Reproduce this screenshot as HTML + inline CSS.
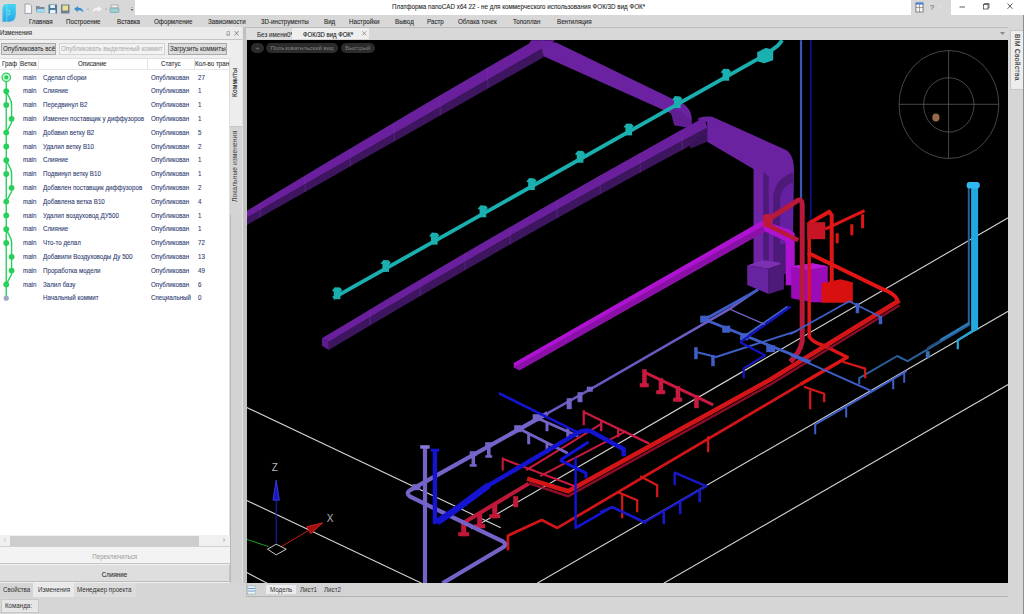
<!DOCTYPE html>
<html><head><meta charset="utf-8">
<style>
*{margin:0;padding:0;box-sizing:border-box}
html,body{width:1024px;height:614px;overflow:hidden;background:#d6d6d6;font-family:"Liberation Sans",sans-serif;font-size:6.2px;color:#222}
.a{position:absolute;white-space:nowrap}
.mi{top:18.4px;color:#2a2a2a;-webkit-text-stroke:0.1px #2a2a2a;font-size:7.1px;transform:scaleX(0.875);transform-origin:0 50%}
.btn{top:43px;height:12px;border:1px solid #a9a9a9;background:#dcdcdc;line-height:10px;padding-left:1px;overflow:hidden;color:#222}
.th{top:60.4px;color:#333;-webkit-text-stroke:0.1px #333;font-size:7.1px;transform:scaleX(0.875);transform-origin:0 50%}
.row{color:#2f3d72;-webkit-text-stroke:0.1px #2f3d72;font-size:7.1px;transform:scaleX(0.875);transform-origin:0 50%}
.pill{top:43.2px;height:9.5px;border-radius:5px;background:#2b2b2b;color:#858585;line-height:11px;text-align:center;font-size:6px}
.vt{transform-origin:0 0;color:#333}
.t{display:inline-block;font-size:7.1px;transform:scaleX(0.875);transform-origin:0 50%}
.tc{display:inline-block;font-size:7.1px;transform:scaleX(0.875);transform-origin:50% 50%}
</style></head><body>
<!-- title bar -->
<div class="a" style="left:0;top:0;width:1024px;height:14.5px;background:#fff"></div>
<div class="a" style="left:0;top:0;width:135px;height:14.5px;background:#d8d8d8"></div>
<div class="a" style="left:911px;top:0;width:40px;height:14.5px;background:#d8d8d8"></div>
<svg class="a" style="left:0;top:0;z-index:5" width="140" height="26">
 <defs><linearGradient id="lg" x1="0" y1="0" x2="0" y2="1"><stop offset="0" stop-color="#3fd6f2"/><stop offset="1" stop-color="#2aa6e6"/></linearGradient></defs>
 <path d="M2.5 21.8 L2.5 9 Q2.5 4 7 4 L15.8 4 L15.8 14 Q15.8 21.8 9 21.8 Z" fill="url(#lg)"/>
 <path d="M6.8 4.2 V21.6" stroke="#9fe4f6" stroke-width="0.7" opacity="0.85"/>
 <path d="M7.2 10.6 H9.6 V14.6 H7.2" fill="none" stroke="#b8eefa" stroke-width="0.7" opacity="0.85"/>
 <path d="M25 4 L29.5 4 L31.5 6 L31.5 13.5 L25 13.5Z" fill="#f4f8fc" stroke="#777" stroke-width="0.6"/>
 <path d="M36 6 L39 6 L40 7 L44.5 7 L44.5 12.5 L36 12.5Z" fill="#7d8a96"/><path d="M37 9 L45.5 9 L44 12.5 L36 12.5Z" fill="#9fd8f2"/>
 <rect x="48.5" y="4.5" width="8.5" height="9" fill="#4d7a98"/><rect x="50.3" y="5" width="4.6" height="3" fill="#e8f0f8"/><rect x="50" y="10" width="5.5" height="3.5" fill="#e8f0f8"/>
 <rect x="61" y="4.5" width="8.5" height="9" fill="#6c8293"/><rect x="62.5" y="5.5" width="5.5" height="5" fill="#f0e08a"/>
 <path d="M74 9 L78 6 L78 7.8 Q83 7.5 83.5 12.5 Q81.5 10 78 10.3 L78 12Z" fill="#3a8fd0"/>
 <circle cx="88" cy="9" r="0.5" fill="#666"/>
 <path d="M102 9 L98 6 L98 7.8 Q93 7.5 92.5 12.5 Q94.5 10 98 10.3 L98 12Z" fill="#f4f4f4"/>
 <circle cx="106" cy="9" r="0.5" fill="#666"/>
 <rect x="111" y="5" width="7" height="3" fill="#f0f0f0" stroke="#777" stroke-width="0.5"/><rect x="110" y="8" width="9" height="4.5" rx="1" fill="#9ccfcf" stroke="#6a8a98" stroke-width="0.5"/>
 <path d="M131.5 7.5 L132.5 7.5 M131 9.5 L133 9.5 L132 10.5Z" stroke="#555" stroke-width="0.6" fill="#555"/>
</svg>
<div class="a" style="left:392px;top:2.6px;color:#222"><span class="t" style="font-size:7.15px;-webkit-text-stroke:0.08px #222">Платформа nanoCAD x64 22 - не для коммерческого использования ФОК/3D вид ФОК*</span></div>
<svg class="a" style="left:900px;top:0" width="124" height="15">
 <rect x="15" y="1.5" width="9" height="11" fill="#c8c8c8"/>
 <rect x="16" y="3.5" width="7" height="8.5" fill="#f4f4f4" stroke="#555" stroke-width="0.6"/><rect x="15.8" y="2.5" width="7.4" height="2" fill="#3b7fd8"/><path d="M19.5 4.5 V12 M16 7.5 H23" stroke="#555" stroke-width="0.5"/>
 <text x="29.8" y="10.2" font-size="8" fill="#5a5a5a" font-family="Liberation Sans">?</text>
 <path d="M39.5 6.5 L41.5 6.5 L40.5 7.6Z" fill="#f8f8f8"/>
 <path d="M59.5 7 H65" stroke="#333" stroke-width="0.8"/>
 <rect x="83.5" y="4.5" width="4.5" height="4.5" fill="none" stroke="#333" stroke-width="0.7"/><path d="M84.5 4.5 V3.5 H89 V8 H88" fill="none" stroke="#333" stroke-width="0.7"/>
 <path d="M107.5 3.5 L112.5 8.8 M112.5 3.5 L107.5 8.8" stroke="#333" stroke-width="0.8"/>
</svg>
<!-- menu bar -->
<div class="a" style="left:0;top:14.5px;width:1024px;height:12.5px;background:#d8d8d8"></div>
<div class="a mi" style="left:29px">Главная</div>
<div class="a mi" style="left:66px">Построение</div>
<div class="a mi" style="left:117px">Вставка</div>
<div class="a mi" style="left:154px">Оформление</div>
<div class="a mi" style="left:208px">Зависимости</div>
<div class="a mi" style="left:261px">3D-инструменты</div>
<div class="a mi" style="left:323.5px">Вид</div>
<div class="a mi" style="left:348.5px">Настройки</div>
<div class="a mi" style="left:394.5px">Вывод</div>
<div class="a mi" style="left:427px">Растр</div>
<div class="a mi" style="left:457.5px">Облака точек</div>
<div class="a mi" style="left:513px">Топоплан</div>
<div class="a mi" style="left:556.5px">Вентиляция</div>

<!-- left panel -->
<div class="a" style="left:0;top:27px;width:243px;height:12.5px;background:#ebebeb;border-bottom:1px solid #c4c4c4"></div>
<div class="a" style="left:0;top:29.1px;color:#333;-webkit-text-stroke:0.1px #333"><span class="t">Изменения</span></div>
<svg class="a" style="left:224px;top:29px" width="18" height="9">
 <path d="M3 2.5 H5.5 V6 H3Z M2.5 6 H6" fill="none" stroke="#888" stroke-width="0.6"/>
 <path d="M10.5 2 L14.5 6.5 M14.5 2 L10.5 6.5" stroke="#666" stroke-width="0.7"/>
</svg>
<div class="a" style="left:0;top:39.5px;width:230px;height:543px;background:#efefef"></div>
<div class="a" style="left:229.5px;top:39.5px;width:12.5px;height:543px;background:#d3d3d3;border-left:1px solid #b9b9bd"></div>
<div class="a" style="left:230.4px;top:40px;width:11.3px;height:85.6px;background:#ededed"></div>
<div class="a" style="left:230.4px;top:125.6px;width:11.3px;height:89.4px;background:#d4d4d4;border-top:1px solid #c6c6c6"></div>
<div class="a vt" style="left:231.2px;top:97.2px;transform:rotate(-90deg);font-size:6.8px;-webkit-text-stroke:0.12px #333">Коммиты</div>
<div class="a vt" style="left:230.6px;top:201.6px;transform:rotate(-90deg);font-size:6.8px;color:#444">Локальные изменения</div>
<div class="a" style="left:241.7px;top:27px;width:5.3px;height:556px;background:#c2c2c2;border-left:0.7px solid #e2e2e2"></div>
<div class="a btn" style="left:1.3px;width:54.7px"><span class="t">Опубликовать всё</span></div>
<div class="a btn" style="left:59.3px;width:105.6px;color:#a8a8a8;background:#f3f3f3;border-color:#d2d2d2"><span class="t">Опубликовать выделенный коммит</span></div>
<div class="a btn" style="left:168px;width:58.7px"><span class="t">Загрузить коммиты</span></div>
<div class="a" style="left:0;top:57.8px;width:230.3px;height:487px;background:#fff;border:1px solid #dedede;border-left:none"></div>
<div class="a" style="left:0;top:58.5px;width:229px;height:11px;background:#fff;border-bottom:1px solid #e8e8e8"></div>
<div class="a" style="left:18.9px;top:59px;width:1px;height:10px;background:#e4e4e4"></div>
<div class="a" style="left:38.4px;top:59px;width:1px;height:10px;background:#e4e4e4"></div>
<div class="a" style="left:146.9px;top:59px;width:1px;height:10px;background:#e4e4e4"></div>
<div class="a" style="left:193.6px;top:59px;width:1px;height:10px;background:#e4e4e4"></div>
<div class="a th" style="left:1.5px">Граф</div>
<div class="a th" style="left:20px">Ветка</div>
<div class="a th" style="left:78px">Описание</div>
<div class="a th" style="left:160.5px">Статус</div>
<div class="a th" style="left:195px">Кол-во тран</div>
<div class="a row" style="top:73.6px;left:23px">main</div><div class="a row" style="top:73.6px;left:43px">Сделал сборки</div><div class="a row" style="top:73.6px;left:151px">Опубликован</div><div class="a row" style="top:73.6px;left:197.5px">27</div>
<div class="a row" style="top:87.4px;left:23px">main</div><div class="a row" style="top:87.4px;left:43px">Слияние</div><div class="a row" style="top:87.4px;left:151px">Опубликован</div><div class="a row" style="top:87.4px;left:197.5px">1</div>
<div class="a row" style="top:101.2px;left:23px">main</div><div class="a row" style="top:101.2px;left:43px">Передвинул B2</div><div class="a row" style="top:101.2px;left:151px">Опубликован</div><div class="a row" style="top:101.2px;left:197.5px">1</div>
<div class="a row" style="top:115.0px;left:23px">main</div><div class="a row" style="top:115.0px;left:43px">Изменен поставщик у диффузоров</div><div class="a row" style="top:115.0px;left:151px">Опубликован</div><div class="a row" style="top:115.0px;left:197.5px">1</div>
<div class="a row" style="top:128.8px;left:23px">main</div><div class="a row" style="top:128.8px;left:43px">Добавил ветку B2</div><div class="a row" style="top:128.8px;left:151px">Опубликован</div><div class="a row" style="top:128.8px;left:197.5px">5</div>
<div class="a row" style="top:142.6px;left:23px">main</div><div class="a row" style="top:142.6px;left:43px">Удалил ветку B10</div><div class="a row" style="top:142.6px;left:151px">Опубликован</div><div class="a row" style="top:142.6px;left:197.5px">2</div>
<div class="a row" style="top:156.4px;left:23px">main</div><div class="a row" style="top:156.4px;left:43px">Слияние</div><div class="a row" style="top:156.4px;left:151px">Опубликован</div><div class="a row" style="top:156.4px;left:197.5px">1</div>
<div class="a row" style="top:170.2px;left:23px">main</div><div class="a row" style="top:170.2px;left:43px">Подвинул ветку B10</div><div class="a row" style="top:170.2px;left:151px">Опубликован</div><div class="a row" style="top:170.2px;left:197.5px">1</div>
<div class="a row" style="top:184.0px;left:23px">main</div><div class="a row" style="top:184.0px;left:43px">Добавлен поставщик диффузоров</div><div class="a row" style="top:184.0px;left:151px">Опубликован</div><div class="a row" style="top:184.0px;left:197.5px">2</div>
<div class="a row" style="top:197.8px;left:23px">main</div><div class="a row" style="top:197.8px;left:43px">Добавлена ветка B10</div><div class="a row" style="top:197.8px;left:151px">Опубликован</div><div class="a row" style="top:197.8px;left:197.5px">4</div>
<div class="a row" style="top:211.6px;left:23px">main</div><div class="a row" style="top:211.6px;left:43px">Удалил воздуховод ДУ500</div><div class="a row" style="top:211.6px;left:151px">Опубликован</div><div class="a row" style="top:211.6px;left:197.5px">1</div>
<div class="a row" style="top:225.4px;left:23px">main</div><div class="a row" style="top:225.4px;left:43px">Слияние</div><div class="a row" style="top:225.4px;left:151px">Опубликован</div><div class="a row" style="top:225.4px;left:197.5px">1</div>
<div class="a row" style="top:239.2px;left:23px">main</div><div class="a row" style="top:239.2px;left:43px">Что-то делал</div><div class="a row" style="top:239.2px;left:151px">Опубликован</div><div class="a row" style="top:239.2px;left:197.5px">72</div>
<div class="a row" style="top:253.0px;left:23px">main</div><div class="a row" style="top:253.0px;left:43px">Добавили Воздуховоды Ду 500</div><div class="a row" style="top:253.0px;left:151px">Опубликован</div><div class="a row" style="top:253.0px;left:197.5px">13</div>
<div class="a row" style="top:266.8px;left:23px">main</div><div class="a row" style="top:266.8px;left:43px">Проработка модели</div><div class="a row" style="top:266.8px;left:151px">Опубликован</div><div class="a row" style="top:266.8px;left:197.5px">49</div>
<div class="a row" style="top:280.6px;left:23px">main</div><div class="a row" style="top:280.6px;left:43px">Залил базу</div><div class="a row" style="top:280.6px;left:151px">Опубликован</div><div class="a row" style="top:280.6px;left:197.5px">6</div>
<div class="a row" style="top:294.4px;left:23px"></div><div class="a row" style="top:294.4px;left:43px">Начальный коммит</div><div class="a row" style="top:294.4px;left:151px">Специальный</div><div class="a row" style="top:294.4px;left:197.5px">0</div>
<svg class="a" style="left:0;top:0" width="20" height="310"><line x1="6.25" y1="77.4" x2="6.25" y2="298.2" stroke="#28d05a" stroke-width="1.4"/><path d="M6.25 91.2 C 8 96.2, 11.6 99.2, 11.6 104.2 L 11.6 122.6 L 6.25 132.6" fill="none" stroke="#28d05a" stroke-width="1.4"/><path d="M6.25 160.2 C 8 165.2, 11.6 168.2, 11.6 173.2 L 11.6 191.6 L 6.25 201.6" fill="none" stroke="#28d05a" stroke-width="1.4"/><path d="M6.25 229.2 C 8 234.2, 11.6 237.2, 11.6 242.2 L 11.6 274.4 L 6.25 284.4" fill="none" stroke="#28d05a" stroke-width="1.4"/><circle cx="6.25" cy="91.2" r="2.9" fill="#28d05a"/><circle cx="6.25" cy="105.0" r="2.9" fill="#28d05a"/><circle cx="11.6" cy="118.8" r="2.9" fill="#28d05a"/><circle cx="6.25" cy="132.6" r="2.9" fill="#28d05a"/><circle cx="6.25" cy="146.4" r="2.9" fill="#28d05a"/><circle cx="6.25" cy="160.2" r="2.9" fill="#28d05a"/><circle cx="6.25" cy="174.0" r="2.9" fill="#28d05a"/><circle cx="11.6" cy="187.8" r="2.9" fill="#28d05a"/><circle cx="6.25" cy="201.6" r="2.9" fill="#28d05a"/><circle cx="6.25" cy="215.4" r="2.9" fill="#28d05a"/><circle cx="6.25" cy="229.2" r="2.9" fill="#28d05a"/><circle cx="6.25" cy="243.0" r="2.9" fill="#28d05a"/><circle cx="11.6" cy="256.8" r="2.9" fill="#28d05a"/><circle cx="11.6" cy="270.6" r="2.9" fill="#28d05a"/><circle cx="6.25" cy="284.4" r="2.9" fill="#28d05a"/><circle cx="6.25" cy="77.4" r="4.2" fill="#d4f6dc" stroke="#28d05a" stroke-width="1.3"/><circle cx="6.25" cy="77.4" r="2.1" fill="#28d05a"/><circle cx="6.25" cy="298.2" r="2.6" fill="#a0a8c0"/></svg>
<!-- scrollbar -->
<div class="a" style="left:0;top:535px;width:230px;height:10.5px;background:#f0f0f0"></div>
<div class="a" style="left:10px;top:535.5px;width:189px;height:10px;background:#cdcdcd"></div>
<div class="a" style="left:3.5px;top:534.5px;color:#b8b8b8;font-size:8.5px">&lsaquo;</div>
<div class="a" style="left:222.5px;top:534.5px;color:#999;font-size:8.5px">&rsaquo;</div>
<div class="a" style="left:0;top:546px;width:230px;height:18px;background:#f3f3f3;border-top:1px solid #d0d0d0;border-bottom:1px solid #c4c4c4;color:#9a9a9a;text-align:center;line-height:19px;font-size:6.3px"><span class="tc">Переключиться</span></div>
<div class="a" style="left:0;top:564.8px;width:230px;height:17.5px;background:#dedede;border-bottom:1px solid #bdbdbd;border-right:1px solid #c4c4c4;color:#333;text-align:center;line-height:19px;font-size:6.3px;-webkit-text-stroke:0.12px #333"><span class="tc">Слияние</span></div>
<!-- bottom -->
<div class="a" style="left:0;top:582.5px;width:1024px;height:31.5px;background:#d6d6d6"></div>
<div class="a" style="left:0;top:583px;width:33px;height:14px;background:#d4d4d4;color:#333;line-height:13px;padding-left:3px"><span class="t">Свойства</span></div>
<div class="a" style="left:33px;top:583px;width:40.5px;height:14px;background:#e9e9e9;color:#333;line-height:13px;padding-left:4.5px"><span class="t">Изменения</span></div>
<div class="a" style="left:73.5px;top:583px;width:62px;height:14px;background:#dcdcdc;color:#333;line-height:13px;padding-left:3.5px"><span class="t">Менеджер проекта</span></div>
<div class="a" style="left:1px;top:599px;width:37.5px;height:13.5px;background:#e6e6e6;border:1px solid #c8c8c8;color:#333;line-height:12px;padding-left:3px;font-size:6px"><span class="t">Команда:</span></div>
<!-- viewport tabs -->
<div class="a" style="left:245px;top:27.3px;width:763px;height:13px;background:#d8d8d8;border-top:1px solid #bcbcbc;border-left:1px solid #bcbcbc"></div>
<div class="a" style="left:246.3px;top:28.4px;width:45.2px;height:10.4px;background:#dedede;color:#333;line-height:13px;padding-left:10.5px"><span class="t" style="-webkit-text-stroke:0.1px #333">Без имени0*</span></div>
<div class="a" style="left:291.5px;top:28.4px;width:77.5px;height:10.4px;background:#efefef;color:#222;line-height:13px;padding-left:11.5px"><span class="t" style="-webkit-text-stroke:0.12px #222;transform:scaleX(0.84)">ФОК/3D вид ФОК*</span></div>
<svg class="a" style="left:360px;top:29px" width="9" height="9"><path d="M2.3 2.3 L6.3 6.3 M6.3 2.3 L2.3 6.3" stroke="#777" stroke-width="0.7"/></svg>
<svg class="a" style="left:998px;top:29px" width="9" height="9"><path d="M2 3 L7 3 L4.5 6Z" fill="#888"/></svg>
<!-- viewport -->
<div class="a" style="left:246.8px;top:39.8px;width:761px;height:543px;background:#000;overflow:hidden">
<svg width="761" height="543" viewBox="246.8 39.8 761 543" style="position:absolute;left:0;top:0" stroke-linejoin="round">
<!-- white floor lines -->
<g stroke="#d6d6d6" stroke-width="1.1" fill="none">
 <path d="M246 407 L500.6 527.6"/>
 <path d="M246 500 L421.4 583"/>
 <path d="M246 572 L267 583"/>
 <path d="M471.3 528.6 L1008 217.5"/>
 <path d="M537 583 L1008 311"/>
 <path d="M663.6 583 L1008 384.4"/>
</g>
<!-- D1 long top-left duct -->
<polygon points="246.0,217.8 273.0,202.4 300.1,186.9 327.1,171.4 354.1,156.0 381.1,140.5 408.2,125.0 435.2,109.5 462.2,94.0 489.2,78.5 516.3,63.0 543.3,47.5 543.3,57.0 516.3,72.2 489.2,87.5 462.2,102.7 435.2,118.0 408.2,133.2 381.1,148.5 354.1,163.8 327.1,179.2 300.1,194.5 273.0,209.8 246.0,225.2" fill="#3e1660"/>
<polygon points="246.0,211.0 271.7,195.4 297.4,179.9 323.1,164.4 348.8,149.0 374.5,133.7 400.1,118.5 425.8,103.4 451.5,88.3 477.2,73.3 502.9,58.4 528.6,43.6 531.0,40.0 555.0,40.0 543.3,47.5 543.3,47.5 516.3,63.0 489.2,78.5 462.2,94.0 435.2,109.5 408.2,125.0 381.1,140.5 354.1,156.0 327.1,171.4 300.1,186.9 273.0,202.4 246.0,217.8" fill="#6a1f9c"/>
<path d="M260.0 209.8 V217.2 M259.5 202.8 L260.0 209.8" stroke="#7a34b0" stroke-width="0.6" opacity="0.7"/>
<path d="M305.0 184.1 V191.7 M304.5 175.6 L305.0 184.1" stroke="#7a34b0" stroke-width="0.6" opacity="0.7"/>
<path d="M350.0 158.3 V166.2 M349.5 148.6 L350.0 158.3" stroke="#7a34b0" stroke-width="0.6" opacity="0.7"/>
<path d="M394.0 133.1 V141.3 M393.5 122.5 L394.0 133.1" stroke="#7a34b0" stroke-width="0.6" opacity="0.7"/>
<path d="M440.0 106.7 V115.2 M439.5 95.4 L440.0 106.7" stroke="#7a34b0" stroke-width="0.6" opacity="0.7"/>
<path d="M487.6 79.5 V88.4 M487.1 67.6 L487.6 79.5" stroke="#7a34b0" stroke-width="0.6" opacity="0.7"/>
<!-- D2 down-right from elbow -->
<path d="M540 40 L556.6 42.5 L672.5 98.7 Q690 104 691.5 117 L691.5 128 L674 125 L671 113.3 L543.3 56 Z" fill="#6a22a0"/><path d="M671 113.3 L674 125 L691.5 128 L691.5 122 Q685 112 671 108Z" fill="#5a1c8a" opacity="0.6"/>
<!-- D3 long lower duct -->
<polygon points="328.6,341.5 363.0,321.0 397.4,300.7 431.8,280.5 466.2,260.7 500.6,241.0 535.0,221.5 569.4,202.3 603.8,183.3 638.2,164.5 672.6,145.9 707.0,127.5 707.0,136.6 672.6,154.9 638.2,173.4 603.8,192.1 569.4,211.0 535.0,230.2 500.6,249.6 466.2,269.2 431.8,289.0 397.4,309.0 363.0,329.3 328.6,349.8" fill="#3e1660"/>
<polygon points="321.7,338.1 356.5,317.2 391.2,296.4 426.0,275.8 460.7,255.4 495.5,235.1 530.2,215.0 565.0,195.1 599.7,175.3 634.5,155.7 669.2,136.3 704.0,117.0 707.0,127.5 707.0,127.5 672.6,145.9 638.2,164.5 603.8,183.3 569.4,202.3 535.0,221.5 500.6,241.0 466.2,260.7 431.8,280.5 397.4,300.7 363.0,321.0 328.6,341.5" fill="#6a1f9c"/>
<polygon points="321.7,337.8 328.6,341.5 328.6,349.8 321.7,345.6" fill="#5a1c88"/>
<polygon points="690,145.6 707,127.5 707,141.5 690,148.6" fill="#3a1458"/>
<path d="M370.0 316.8 V325.1 M369.5 309.4 L370.0 316.8" stroke="#7a34b0" stroke-width="0.6" opacity="0.7"/>
<path d="M420.0 287.4 V295.8 M419.5 279.7 L420.0 287.4" stroke="#7a34b0" stroke-width="0.6" opacity="0.7"/>
<path d="M465.0 261.3 V269.8 M464.5 253.2 L465.0 261.3" stroke="#7a34b0" stroke-width="0.6" opacity="0.7"/>
<path d="M510.0 235.6 V244.2 M509.5 227.0 L510.0 235.6" stroke="#7a34b0" stroke-width="0.6" opacity="0.7"/>
<path d="M557.0 209.2 V217.9 M556.5 199.9 L557.0 209.2" stroke="#7a34b0" stroke-width="0.6" opacity="0.7"/>
<path d="M600.0 185.4 V194.2 M599.5 175.5 L600.0 185.4" stroke="#7a34b0" stroke-width="0.6" opacity="0.7"/>
<path d="M640.0 163.5 V172.4 M639.5 152.9 L640.0 163.5" stroke="#7a34b0" stroke-width="0.6" opacity="0.7"/>
<path d="M682.0 140.9 V149.9 M681.5 129.5 L682.0 140.9" stroke="#7a34b0" stroke-width="0.6" opacity="0.7"/>
<!-- D3b down-right + riser -->
<path d="M697 119 Q701 115.5 712 116.6 L785.3 149.6 Q794 154 793.8 171.6 L792 262 L768.5 262 L768.5 200 L756.7 170.9 L707 141.5 L707 122 Z" fill="#6a22a0"/>
<polygon points="753.3,168 768.5,176 768.5,265.2 753.3,265.2" fill="#6e24a4"/>
<polygon points="763,172 768.5,176 768.5,265.2 763,265.2" fill="#4e1a7a"/>
<path d="M773 265 V196 Q775 178 793 172 V182 Q781 186 780 200 V265Z" fill="#4e1a7a"/><path d="M780 265 V200 Q781 186 793 182 V265Z" fill="#6420a0"/>
<!-- base box -->
<polygon points="747,265.2 762.2,259.8 783.7,263 768.5,268.5" fill="#7a30b0"/>
<polygon points="747,265.2 768.5,268.5 768.5,293.8 747,284.9" fill="#6824a0"/>
<polygon points="768.5,268.5 783.7,263 783.7,289 768.5,293.8" fill="#4e1a7a"/>
<polygon points="780,243.7 789,243.7 789,274 780,274" fill="#4e1a7a"/>
<!-- magenta duct M1 -->
<polygon points="513.5,362.8 762.2,220.4 789,229.4 794.5,233 794.5,285 785.5,285 785.5,241 765,231.2 519.3,370 513.5,367" fill="#b012d2"/>
<polygon points="513.5,367 762.2,226 765,231.2 519.3,370" fill="#8a10a8"/>
<polygon points="791,266 812,263 827.6,266 827.6,302 812,302 791,298" fill="#9a0cb8"/>
<polygon points="791,266 812,263 827.6,266 806,270" fill="#b818d8"/>
<!-- cyan pipe C1 -->
<path d="M333 298 L760.5 57.1 Q772 50 778 45 L782 40" stroke="#1ab0b0" stroke-width="3.8" fill="none"/>
<g fill="#1ab0b0">
<polygon points="331.8,290.5 334.6,287.0 339.8,287.4 341.9,289.8 340.7,291.2 333.0,291.2"/><rect x="333.6" y="290.5" width="6.6" height="8.5" />
<polygon points="380.4,263.2 383.2,259.7 388.4,260.1 390.5,262.5 389.3,263.9 381.6,263.9"/><rect x="382.2" y="263.2" width="6.6" height="8.5" />
<polygon points="429.0,235.9 431.8,232.4 437.0,232.8 439.1,235.2 437.9,236.6 430.2,236.6"/><rect x="430.8" y="235.9" width="6.6" height="8.5" />
<polygon points="477.6,208.6 480.4,205.1 485.6,205.5 487.7,207.9 486.5,209.3 478.8,209.3"/><rect x="479.4" y="208.6" width="6.6" height="8.5" />
<polygon points="526.2,181.3 529.0,177.8 534.2,178.2 536.3,180.6 535.1,182.0 527.4,182.0"/><rect x="528.0" y="181.3" width="6.6" height="8.5" />
<polygon points="574.8,154.0 577.6,150.5 582.8,150.9 584.9,153.3 583.7,154.7 576.0,154.7"/><rect x="576.6" y="154.0" width="6.6" height="8.5" />
<polygon points="623.4,126.7 626.2,123.2 631.4,123.6 633.5,126.0 632.3,127.4 624.6,127.4"/><rect x="625.2" y="126.7" width="6.6" height="8.5" />
<polygon points="672.0,99.3 674.8,95.8 680.0,96.2 682.1,98.6 680.9,100.0 673.2,100.0"/><rect x="673.8" y="99.3" width="6.6" height="8.5" />
<polygon points="720.6,72.0 723.4,68.5 728.6,68.9 730.7,71.3 729.5,72.7 721.8,72.7"/><rect x="722.4" y="72.0" width="6.6" height="8.5" />
<polygon points="757,52 766,47.5 773,50 773,60 764,63 757,61"/>
</g>
<!-- blue vertical lines -->
<path d="M800.8 40 V206" stroke="#3a58b8" stroke-width="2.2"/>
<path d="M810.5 40 V222" stroke="#10109a" stroke-width="1.6"/>
<!-- red risers -->
<path d="M767 220 L798 200 Q802 199 802 204 V341 Q800 352 790 361.6" stroke="#b8183a" stroke-width="5" fill="none"/><rect x="763" y="214" width="9" height="13" rx="2" fill="#c01a3a"/>
<path d="M765.8 224 L798 240" stroke="#b8183a" stroke-width="4.5"/>
<path d="M809 223 L829 211.5 L831.5 215 V284" stroke="#e01515" stroke-width="4" fill="none"/>
<path d="M809 223 V336.5 Q812 342 824 345.6 L847 357 L800 384.3" stroke="#e01515" stroke-width="3.5" fill="none"/>
<path d="M825 229 L864.4 210.5 M837 233 V243 M851.6 224 V235 M862.4 214 V228" stroke="#e01515" stroke-width="3" fill="none"/>
<rect x="807" y="222" width="18" height="17" fill="#c81525"/>
<polygon points="821.3,283 840,279 852.6,282 852.6,302.5 821.3,302.5" fill="#d81010"/>
<path d="M807.6 252.6 L880 287.8 Q896 294 897 300" stroke="#e51515" stroke-width="4" fill="none"/>
<!-- cyan riser right -->
<path d="M968.6 186 V325 L907.4 361 L897 355.8 L859 378 V384" stroke="#2a6098" stroke-width="2" fill="none"/><path d="M927 347.4 L969 323" stroke="#2a6098" stroke-width="1" fill="none"/><rect x="925.6" y="351" width="3.9" height="7" fill="#3a70b0"/>
<path d="M974.4 186 V330" stroke="#22a8e0" stroke-width="7"/>
<rect x="966.4" y="181.7" width="13.2" height="6.5" rx="3" fill="#30b8f0"/>
<path d="M975 329 L957.6 340 V349" stroke="#22a8dc" stroke-width="2.2" fill="none"/>
<path d="M969.3 322.5 L940 340" stroke="#2a80c0" stroke-width="2" fill="none"/>
<!-- red main pipes -->
<path d="M527 478.4 L568 491 L769 380 L899.4 300" stroke="#d41518" stroke-width="4.6" fill="none"/>
<path d="M529 483 L568 496 L769 385 L899.4 305" stroke="#a01030" stroke-width="2.5" fill="none" opacity="0.85"/>
<path d="M507.7 550 V535.5 L541.5 519.9 L557.2 527.7 L800 384.3" stroke="#d01518" stroke-width="2.8" fill="none"/>
<path d="M803.7 386.6 L824 393.5 V402 M810 390 V409 M842.4 361.6 L865 368.4 V378 M640 476 L657 485 V497 M618 492 L637 500 V512 M622 494 V518 M708 436 V452" stroke="#d81818" stroke-width="2.2" fill="none"/>
<!-- red supports/benches -->
<path d="M644 372 L713 404.7" stroke="#c81a40" stroke-width="3" fill="none"/>
<g fill="#c81a40"><rect x="642" y="369" width="4.5" height="18"/><rect x="658.5" y="378" width="4.5" height="15"/><rect x="675.5" y="386" width="4.5" height="14"/><rect x="694" y="395" width="4.5" height="13"/><rect x="639.5" y="383" width="9" height="4"/><rect x="656" y="390" width="9" height="4"/><rect x="673" y="397.5" width="9" height="4"/></g>
<path d="M584 412 L649 443.4 M583.5 410 V425 M601 421 V431 M618 429 V437" stroke="#c81a40" stroke-width="2.3" fill="none"/>
<path d="M502.5 457.3 V470.3 M502.5 458.6 L578 487.3 M526 470 L601.5 423.4 M540 476 L626 431" stroke="#c81a40" stroke-width="2" fill="none"/>
<path d="M463.4 522.5 L528.5 483.4" stroke="#c01838" stroke-width="4" fill="none"/>
<g fill="#c01838"><rect x="461" y="522" width="5" height="14"/><rect x="477" y="514" width="5" height="14"/><rect x="492" y="504" width="5" height="14"/><rect x="513" y="496" width="5" height="11"/><rect x="458" y="532" width="11" height="4"/><rect x="474" y="524" width="11" height="4"/><rect x="489" y="514" width="11" height="4"/></g>
<!-- lavender pipe -->
<path d="M442.3 583 L503 547 Q507 544 503 541.5 L410 496.5 Q405 493 410 490 L547.6 413" stroke="#7563c8" stroke-width="4.2" fill="none"/>
<path d="M547.6 413 L589.6 389.5 L729 309 L756.5 290" stroke="#6a58c0" stroke-width="2.6" fill="none"/>
<path d="M424.8 447 V583" stroke="#7563c8" stroke-width="4.2"/>
<rect x="420" y="445" width="9.5" height="3.5" fill="#8a78d8"/>
<g fill="#7563c8"><rect x="412" y="484" width="8" height="6"/><rect x="471.3" y="453" width="3.6" height="13"/><rect x="469.5" y="451" width="7" height="5"/><rect x="486.8" y="444" width="3.6" height="13"/><rect x="485" y="442" width="7" height="5"/><rect x="469.5" y="464" width="7" height="2.5"/><rect x="485" y="455" width="7" height="2.5"/><rect x="514" y="425" width="7" height="7"/><rect x="532.5" y="414" width="7" height="7"/><rect x="566.5" y="398" width="5" height="11"/><rect x="577.3" y="392" width="5" height="10"/><rect x="586.6" y="386.5" width="6" height="5"/></g>
<path d="M518 428 L567.6 453 M536.3 417.5 L578 436" stroke="#7563c8" stroke-width="2.8" fill="none"/>
<path d="M528.5 433.5 V444 M546.8 442.6 V453 M546.8 421.8 V431 M567.6 428 V438.7" stroke="#7563c8" stroke-width="3" fill="none"/>
<!-- blue pipes -->
<path d="M434.7 451 V522 L459 507 L488.6 485 L577.5 432.7 Q584 429 590.6 431 L623.5 449 V456" stroke="#1414d0" stroke-width="4.4" fill="none"/>
<path d="M437 522 L459 507 L488.6 485" stroke="#1414d0" stroke-width="6.5" fill="none"/>
<path d="M430.5 450 H439" stroke="#1414d8" stroke-width="3"/>
<path d="M498.5 393 L577 432" stroke="#1414d0" stroke-width="2.6" fill="none"/>
<path d="M559.8 460 L588.4 441.7 M559.8 460 L585.8 473 V478" stroke="#1414d8" stroke-width="3" fill="none"/>
<path d="M575.4 457.3 V527.7 L611.9 506.8 L640 519.9 L646 523" stroke="#1414d8" stroke-width="2.4" fill="none"/>
<path d="M674.5 485 V472.4 L706 486 L644 522 L612 507 L600 512" stroke="#1818c8" stroke-width="2.4" fill="none"/>
<path d="M663.5 511 V524 M680 501.5 V514 M699.5 490 V502" stroke="#1818c8" stroke-width="2.6" fill="none"/>
<path d="M790 354.7 L872 391.2 L906.3 371 M872 391.2 L815 424.3 V434 M893 379 V389 M904 372 V382.5 M846 406.8 V417.2" stroke="#3f5ec8" stroke-width="2" fill="none"/>
<path d="M704.4 319.3 L758 289.4" stroke="#3f5ec8" stroke-width="2.8" fill="none"/><path d="M790 334 L849 301 L881 317" stroke="#3f5ec8" stroke-width="1.8" fill="none"/><g fill="#3f5ec8"><rect x="700" y="315.5" width="9" height="7"/><rect x="722" y="325.5" width="8" height="7"/><rect x="740" y="333" width="8" height="7"/><rect x="766" y="345" width="9" height="7"/><rect x="694" y="347" width="3.5" height="12"/><rect x="711" y="355" width="3.5" height="11"/><rect x="855.5" y="303" width="3.5" height="10"/><rect x="878.5" y="316" width="3.5" height="8"/></g>
<path d="M704.4 319.3 L810.3 361.7" stroke="#3f5ec8" stroke-width="2.8" fill="none"/><path d="M740 338.9 L787.5 306.3 M697 352 L715.8 356.8 L797 330.7" stroke="#3f5ec8" stroke-width="2" fill="none"/>
<path d="M740 342 L764.7 355 L743.5 368.2 V378 M740 342 L790.7 306.3" stroke="#1414c0" stroke-width="2.2" fill="none"/>
<path d="M680 337.2 L728.9 308.7 L764.7 324.2" stroke="#7060c0" stroke-width="1.2" fill="none"/>
<!-- UCS icon -->
<path d="M276 542.7 V484" stroke="#2020c8" stroke-width="1"/>
<polygon points="272.8,500 276,480 279.2,500" fill="#1a1ab8" stroke="#3a3af0" stroke-width="0.9"/>
<path d="M281 546.5 L318 524.5" stroke="#c81818" stroke-width="1"/>
<polygon points="306.5,526.5 322.4,522.7 310.5,533.5" fill="#a01010" stroke="#e02020" stroke-width="0.9"/>
<path d="M246 539 L268.5 546.5" stroke="#20a020" stroke-width="1"/>
<polygon points="267.3,549 276,544 286,549 276,554.7" fill="none" stroke="#e0e0e0" stroke-width="0.9"/>
<text x="271.5" y="471" font-size="10" fill="#b8b8b8" font-family="Liberation Sans">Z</text>
<text x="326.5" y="521.5" font-size="10" fill="#b8b8b8" font-family="Liberation Sans">X</text>
<!-- compass -->
<g stroke="#5e5e5e" stroke-width="0.75" fill="none">
 <ellipse cx="948.7" cy="104.3" rx="49.9" ry="54"/><ellipse cx="948.6" cy="104.7" rx="25.2" ry="27.2"/>
 <path d="M898.8 104.1 H998.6 M948.4 50.3 V158.3"/>
</g>
<ellipse cx="935.7" cy="117.2" rx="3.6" ry="4" fill="#986a4a"/>
</svg>

</div>
<div class="a pill" style="left:251px;width:13px">+</div>
<div class="a pill" style="left:265.8px;width:72.6px">Пользовательский вид</div>
<div class="a pill" style="left:340.8px;width:34px">Быстрый</div>
<!-- layout tabs -->
<div class="a" style="left:245.5px;top:582.6px;width:764px;height:14.3px;background:#d4d4d4;border-left:1px solid #bdbdbd;border-bottom:1px solid #b4b4b4;border-right:1px solid #c4c4c4"></div>
<svg class="a" style="left:246px;top:585px" width="11" height="10"><rect x="1.5" y="1" width="8" height="8" fill="#eef3f8" stroke="#8aa" stroke-width="0.5"/><path d="M2 3.5 H9 M2 6 H9" stroke="#5a8ed0" stroke-width="0.9"/></svg>
<div class="a" style="left:266px;top:584.5px;width:30px;height:9.8px;background:#ececec;color:#333;line-height:9.8px;padding-left:4px"><span class="t">Модель</span></div>
<div class="a" style="left:296.5px;top:584.5px;width:22.5px;height:9.8px;background:#d2d2d2;color:#333;line-height:9.8px;padding-left:3px"><span class="t">Лист1</span></div>
<div class="a" style="left:320.5px;top:584.5px;width:23px;height:9.8px;background:#d2d2d2;color:#333;line-height:9.8px;padding-left:3px"><span class="t">Лист2</span></div>
<!-- BIM strip -->
<div class="a" style="left:1008px;top:27px;width:16px;height:587px;background:#d6d6d6"></div>
<div class="a" style="left:1010.4px;top:29.8px;width:12.2px;height:60.2px;background:#ededed;border:1px solid #c8c8c8;border-right:none"></div>
<div class="a vt" style="left:1020.5px;top:33.8px;transform:rotate(90deg);font-size:6.6px;letter-spacing:0.35px;-webkit-text-stroke:0.12px #333">BIM Свойства</div>
<div class="a" style="left:1022.6px;top:14.5px;width:1.4px;height:600px;background:#8e8e8e"></div>
</body></html>
